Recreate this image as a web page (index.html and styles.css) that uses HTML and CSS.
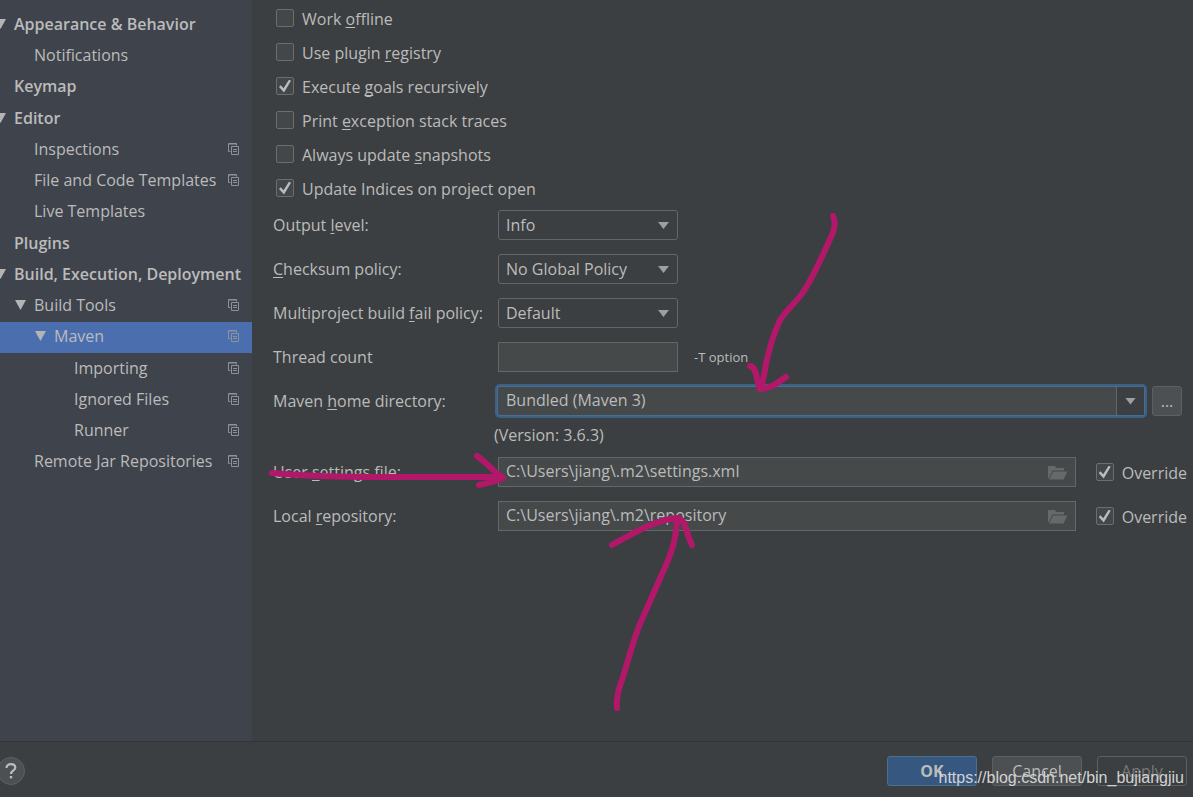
FILE: index.html
```html
<!DOCTYPE html>
<html lang="en">
<head>
<meta charset="utf-8">
<title>Settings – Maven</title>
<link rel="stylesheet" href="styles.css">
</head>
<body>
<svg class="sprites" aria-hidden="true">
  <symbol id="copy" viewBox="0 0 11 12">
    <path d="M2.5 8.5H.5V.5h8v2" fill="none" stroke="currentColor"/>
    <path d="M1 1.500H8.500" fill="none" stroke="currentColor" stroke-opacity=".5"/>
    <path d="M3.500 3.500h7v8h-7z" fill="none" stroke="currentColor"/>
    <path d="M5 6.500h4M5 8.500h4" fill="none" stroke="currentColor"/>
  </symbol>
  <symbol id="folder" viewBox="0 0 20 15">
    <path d="M0 13V1h6.500l2 2H16v2.500H4.500L1 13z" fill="currentColor"/>
    <path d="M5.200 6.500H19.500L15.500 14.500H1z" fill="currentColor"/>
  </symbol>
</svg>
<div class="dialog">
  <nav class="sidebar" aria-label="Settings">
    <div class="group">
      <a class="item top open" href="#appearance">Appearance &amp; Behavior</a>
      <a class="item" href="#notifications">Notifications</a>
      <a class="item top" href="#keymap">Keymap</a>
    </div>
    <div class="group">
      <a class="item top open" href="#editor">Editor</a>
      <a class="item" href="#inspections">Inspections<svg class="copy"><use href="#copy"/></svg></a>
      <a class="item" href="#templates">File and Code Templates<svg class="copy"><use href="#copy"/></svg></a>
      <a class="item" href="#live">Live Templates</a>
    </div>
    <div class="group">
      <a class="item top" href="#plugins">Plugins</a>
      <a class="item top open" href="#build">Build, Execution, Deployment</a>
      <a class="item open" href="#tools">Build Tools<svg class="copy"><use href="#copy"/></svg></a>
      <a class="item deep open selected" href="#maven" aria-current="page">Maven<svg class="copy"><use href="#copy"/></svg></a>
    </div>
    <div class="group">
      <a class="item deeper" href="#importing">Importing<svg class="copy"><use href="#copy"/></svg></a>
      <a class="item deeper" href="#ignored">Ignored Files<svg class="copy"><use href="#copy"/></svg></a>
      <a class="item deeper" href="#runner">Runner<svg class="copy"><use href="#copy"/></svg></a>
      <a class="item" href="#remote">Remote Jar Repositories<svg class="copy"><use href="#copy"/></svg></a>
    </div>
  </nav>

  <main class="content">
    <div class="checks">
      <label class="check"><input type="checkbox"><span>Work <u>o</u>ffline</span></label>
      <label class="check"><input type="checkbox"><span>Use plugin <u>r</u>egistry</span></label>
      <label class="check"><input type="checkbox" checked><span>Execute <u>g</u>oals recursively</span></label>
      <label class="check"><input type="checkbox"><span>Print <u>e</u>xception stack traces</span></label>
      <label class="check"><input type="checkbox"><span>Always update <u>s</u>napshots</span></label>
      <label class="check"><input type="checkbox" checked><span>Update Indices on project open</span></label>
    </div>
    <div class="form">
      <label class="caption" for="output">Output <u>l</u>evel:</label>
      <div class="line"><span class="select"><select id="output"><option>Info</option></select></span></div>

      <label class="caption" for="checksum"><u>C</u>hecksum policy:</label>
      <div class="line"><span class="select"><select id="checksum"><option>No Global Policy</option></select></span></div>

      <label class="caption" for="fail">Multiproject build <u>f</u>ail policy:</label>
      <div class="line"><span class="select"><select id="fail"><option>Default</option></select></span></div>

      <label class="caption" for="threads">Thread count</label>
      <div class="line"><input class="field short" id="threads" type="text"><span class="hint">-T option</span></div>

      <label class="caption" for="home">Maven <u>h</u>ome directory:</label>
      <div>
        <div class="line home">
          <div class="combo">
            <input id="home" type="text" value="Bundled (Maven 3)">
            <button class="drop" type="button" aria-label="Show choices"></button>
          </div>
          <button class="more" type="button" aria-label="Browse">...</button>
        </div>
        <p class="version">(Version: 3.6.3)</p>
      </div>

      <label class="caption" for="settings">User <u>s</u>ettings file:</label>
      <div class="line path">
        <div class="field browse"><input id="settings" type="text" value="C:\Users\jiang\.m2\settings.xml"><button type="button" aria-label="Choose file"><svg><use href="#folder"/></svg></button></div>
        <label class="check"><input type="checkbox" checked><span>Override</span></label>
      </div>

      <label class="caption" for="repo">Local <u>r</u>epository:</label>
      <div class="line path">
        <div class="field browse"><input id="repo" type="text" value="C:\Users\jiang\.m2\repository"><button type="button" aria-label="Choose folder"><svg><use href="#folder"/></svg></button></div>
        <label class="check"><input type="checkbox" checked><span>Override</span></label>
      </div>
    </div>
  </main>

  <footer class="footer">
    <button class="help" type="button" aria-label="Help"><svg viewBox="0 0 12 16"><path d="M1.500 5C1.500 2.500 3.500 1.200 6 1.200S10.300 2.600 10.300 4.800C10.300 7.400 6 7.600 6 11" fill="none" stroke="currentColor" stroke-width="2.200"/><path d="M4.800 13h2.400v2.400H4.800z" fill="currentColor"/></svg></button>
    <div class="actions">
      <button class="button primary" type="button">OK</button>
      <button class="button" type="button">Cancel</button>
      <button class="button" type="button" disabled>Apply</button>
    </div>
  </footer>

  <svg class="marks" width="1193" height="797" aria-hidden="true">
    <path d="M833 216C836 222 835 228 832 235C823 254 812 281 801 295C794 304 784 313 780 320C773 335 767 356 764 375L761 389"/>
    <path d="M750 366C757 367 756 380 760 389C770 389 779 382 786 377"/>
    <path d="M272 473C305 476 340 477 380 477L455 477L502 477"/>
    <path d="M477 456C486 462 493 471 503 478C496 482 487 483 479 485"/>
    <path d="M617 708C616 698 618 690 622 680C630 655 634 636 643 617C651 599 659 581 666 565C673 549 676 538 677 521"/>
    <path d="M612 545C633 533 653 521 676 518C686 517 686 534 692 545"/>
  </svg>
  <span class="watermark">https://blog.csdn.net/bin_bujiangjiu</span>
</div>
</body>
</html>
```
FILE: styles.css
```css
* { box-sizing: border-box; }

body {
  margin: 0;
  background: #3c3f41;
  color: #bbbbbb;
  font: 16px/20px "Open Sans", "Noto Sans", sans-serif;
}

button, input, select {
  margin: 0;
  padding: 0;
  border: 0;
  outline: 0;
  background: none;
  color: inherit;
  font: inherit;
}

u {
  text-decoration-thickness: 1px;
  text-underline-offset: 2px;
  text-decoration-skip-ink: none;
}

.sprites { display: none; }

.dialog {
  position: relative;
  display: grid;
  grid-template: 1fr auto / 252px 1fr;
  min-height: 100vh;
  overflow: hidden;
}

/* Category tree */
.sidebar {
  padding-top: 9px;
  background: #3f434c;
}

.group { padding-top: 1px; }

.item {
  display: flex;
  align-items: center;
  height: 31px;
  padding: 0 13px 3px 34px;
  color: inherit;
  text-decoration: none;
  white-space: nowrap;
}

.top { padding-left: 14px; font-weight: 600; }
.deep { padding-left: 54px; }
.deeper { padding-left: 74px; }
.selected { background: #4b6eaf; }

.open::before {
  content: "";
  flex: none;
  width: 11px;
  height: 10px;
  margin: 0 8px 0 -19px;
  background: #b2b4b5;
  clip-path: polygon(0 0, 100% 0, 50% 100%);
}

.copy {
  width: 11px;
  height: 12px;
  margin-left: auto;
  color: #8b9299;
}

/* Settings page */
.content { padding: 1px 6px 40px 21px; }

.checks { padding-left: 3px; }

.check {
  display: flex;
  align-items: center;
  gap: 8px;
  height: 34px;
}

.check span { padding-top: 1px; }

.check input {
  appearance: none;
  display: grid;
  place-items: center;
  width: 18px;
  height: 18px;
  border: 1px solid #6b6d6e;
  border-radius: 2px;
  background: #43474a;
}

.check input:checked::before {
  content: "";
  width: 12px;
  height: 13px;
  background: #bbbbbb;
  clip-path: polygon(0 58%, 14% 45%, 38% 68%, 84% 0, 100% 10%, 42% 100%);
}

.form {
  display: grid;
  grid-template-columns: 225px 1fr;
  gap: 14px 0;
  padding-top: 5px;
}

.caption { line-height: 30px; }

.line {
  display: flex;
  align-items: center;
  height: 30px;
}

.select { position: relative; width: 180px; }

.select select {
  appearance: none;
  display: block;
  width: 100%;
  height: 30px;
  padding: 0 28px 0 7px;
  border: 1px solid #646668;
  border-radius: 3px;
}

.select::after, .drop::before {
  content: "";
  width: 11px;
  height: 7px;
  background: #9da0a2;
  clip-path: polygon(0 0, 100% 0, 50% 100%);
}

.select::after {
  position: absolute;
  top: 12px;
  right: 9px;
  pointer-events: none;
}

.field {
  height: 30px;
  border: 1px solid #646668;
  background: #45494a;
}

.short { width: 180px; padding: 0 7px; }
.hint { margin-left: 16px; font-size: 13px; }

.home { gap: 8px; padding-right: 5px; }

.combo {
  display: flex;
  flex: 1;
  height: 28px;
  border-radius: 2px;
  background: #45494a;
  box-shadow: 0 0 0 1px #466d94, 0 0 0 3px #3d6185;
}

.combo input { flex: 1; min-width: 0; padding: 0 8px 2px; }

.drop {
  display: grid;
  place-items: center;
  width: 28px;
  border-left: 1px solid #646668;
  background: #3c3f41;
}

.more {
  width: 30px;
  height: 30px;
  border: 1px solid #5e6060;
  border-radius: 3px;
  background: #4c5052;
}

.version {
  margin: 0 0 0 -4px;
  padding-top: 11px;
  line-height: 16px;
}

.path { gap: 20px; }
.browse { display: flex; flex: 1; }
.browse input { flex: 1; min-width: 0; padding: 0 7px 2px; }
.browse button { display: grid; place-items: center; width: 34px; color: #64696c; }
.browse svg { width: 20px; height: 15px; }

/* Dialog buttons */
.footer {
  grid-column: 1 / -1;
  display: flex;
  align-items: center;
  justify-content: space-between;
  height: 56px;
  padding: 2px 6px 0 0;
  border-top: 1px solid #323435;
}

.help {
  display: grid;
  place-items: center;
  width: 28px;
  height: 28px;
  margin-left: -3px;
  border: 1px solid #5e6060;
  border-radius: 50%;
  background: #4c5052;
}

.help svg { width: 12px; height: 16px; }

.actions { display: flex; gap: 15px; }

.button {
  width: 90px;
  height: 30px;
  border: 1px solid #5e6060;
  border-radius: 3px;
  background: #4c5052;
}

.primary { border-color: #4c708c; background: #365880; font-weight: 700; }
.button:disabled { background: none; color: #777777; }

/* Hand-drawn pointers over the form */
.marks {
  position: absolute;
  top: 0;
  left: 0;
  fill: none;
  stroke: #b3176a;
  stroke-width: 6px;
  stroke-linecap: round;
  stroke-linejoin: round;
  pointer-events: none;
}

.watermark {
  position: absolute;
  right: 9px;
  bottom: 9px;
  color: #d2d3d4;
  font: 16px/20px "Liberation Sans", Arial, sans-serif;
  pointer-events: none;
}
```
